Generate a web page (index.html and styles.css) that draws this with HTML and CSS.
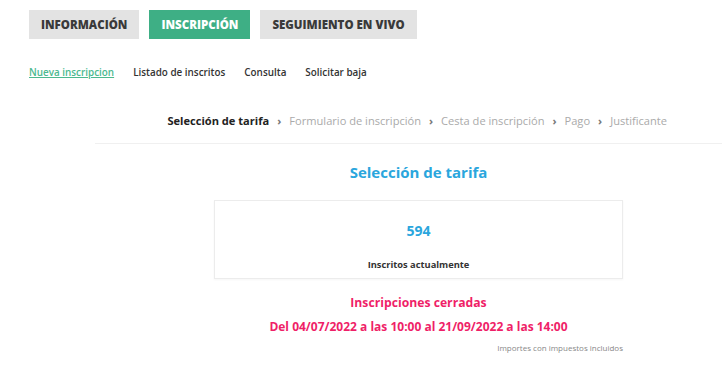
FILE: index.html
```html
<!DOCTYPE html>
<html lang="es">
<head>
    <meta charset="UTF-8">
    <meta name="viewport" content="width=device-width, initial-scale=1.0">
    <title>Inscripción</title>
    <link rel="stylesheet" href="styles.css">
</head>
<body>
<div class="tabs">
    <a class="tab">INFORMACIÓN</a>
    <a class="tab active">INSCRIPCIÓN</a>
    <a class="tab">SEGUIMIENTO EN VIVO</a>
</div>

<div class="subnav">
    <a class="current">Nueva inscripcion</a>
    <a>Listado de inscritos</a>
    <a>Consulta</a>
    <a>Solicitar baja</a>
</div>

<div class="steps">
    <span class="step done">Selección de tarifa</span>
    <span class="sep">&rsaquo;</span>
    <span class="step">Formulario de inscripción</span>
    <span class="sep">&rsaquo;</span>
    <span class="step">Cesta de inscripción</span>
    <span class="sep">&rsaquo;</span>
    <span class="step">Pago</span>
    <span class="sep">&rsaquo;</span>
    <span class="step">Justificante</span>
</div>

<div class="content">
    <h2>Selección de tarifa</h2>
    <div class="counter">
        <div class="number">594</div>
        <div class="label">Inscritos actualmente</div>
    </div>
    <p class="closed">Inscripciones cerradas</p>
    <p class="dates">Del 04/07/2022 a las 10:00 al 21/09/2022 a las 14:00</p>
    <p class="note">Importes con impuestos incluidos</p>
</div>
</body>
</html>
```

FILE: styles.css
```css
body{
    margin: 0;
    background: #fff;
    font-family: "Open Sans", "Liberation Sans", sans-serif;
    color: #333;
}

.tabs{
    display: flex;
    gap: 10px;
    padding: 10px 0 0 29px;
}
.tab{
    height: 29px;
    line-height: 29px;
    padding: 0 12px;
    background: #e3e3e3;
    color: #3a3a3a;
    font-size: 11.5px;
    font-weight: 800;
}
.tab.active{
    background: #3eaf85;
    color: #fff;
}

.subnav{
    display: flex;
    gap: 19px;
    padding: 26px 0 0 29px;
    font-size: 9.9px;
    font-weight: 600;
}
.subnav a{
    color: #333;
}
.subnav a.current{
    color: #4cb98f;
    text-decoration: underline;
}

.steps{
    display: flex;
    justify-content: flex-end;
    align-items: center;
    gap: 8px;
    margin: 34px 0 0 95px;
    padding: 0 55px 15px 0;
    border-bottom: 1px solid #f0f0f0;
    font-size: 11.1px;
    color: #aaa;
}
.steps .done{
    color: #222;
    font-weight: 700;
}
.steps .sep{
    color: #777;
    font-weight: 700;
}

.content{
    width: 409px;
    margin-left: 214px;
    text-align: center;
}
h2{
    margin: 18px 0 0;
    font-size: 15px;
    font-weight: 700;
    color: #2aa6dd;
}
.counter{
    margin-top: 18px;
    height: 77px;
    border: 1px solid #ececec;
    box-shadow: 0 1px 2px rgba(0, 0, 0, 0.04);
}
.number{
    padding-top: 20px;
    font-size: 14px;
    font-weight: 700;
    color: #2aa6dd;
}
.label{
    margin-top: 18px;
    font-size: 9.3px;
    font-weight: 700;
    color: #333;
}
.closed{
    margin: 15px 0 0;
    font-size: 12.2px;
    font-weight: 700;
    color: #ef1f68;
}
.dates{
    margin: 7px 0 0;
    font-size: 12px;
    font-weight: 700;
    color: #ef1f68;
}
.note{
    margin: 7px 0 0;
    text-align: right;
    font-size: 8px;
    color: #888;
}
```
